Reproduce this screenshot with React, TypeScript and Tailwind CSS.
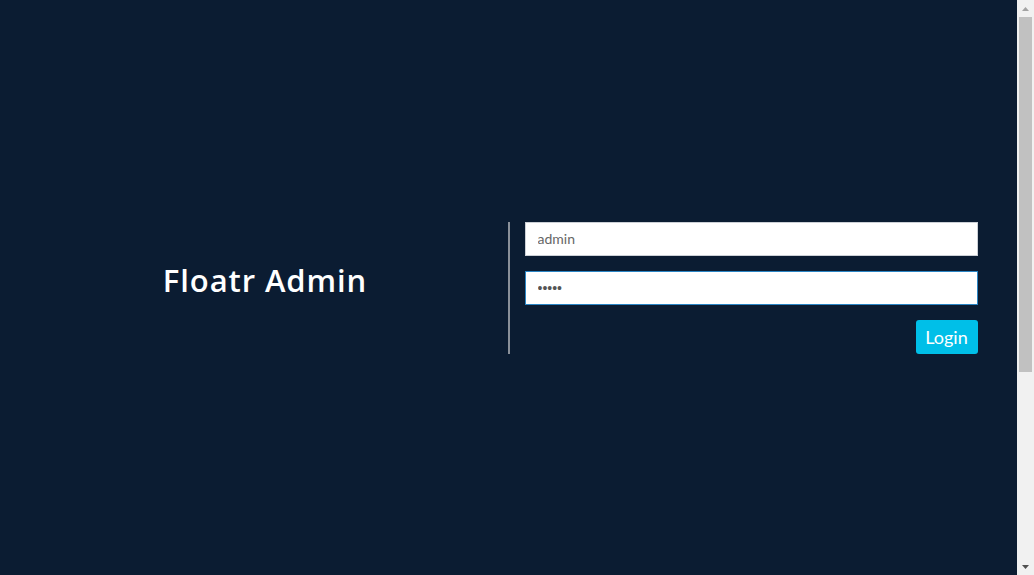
import React from "react";

export default function App() {
  return (
    <div className="flex h-[575px] w-full overflow-hidden">
      <div className="flex-1 bg-[#0b1c32] flex items-center">
        <div className="w-[970px] mx-auto px-[15px] -translate-x-px">
          <div className="flex -mx-[15px]">
            <div className="w-1/2 px-[15px] flex items-center justify-center">
              <h1 className="text-white font-semibold text-[31px] tracking-[0.9px] font-['Open_Sans',sans-serif] -mt-[14px]">
                Floatr Admin
              </h1>
            </div>
            <div className="w-1/2 border-l-2 border-[#8a9099] px-[15px]">
              <div className="mb-[15px]">
                <input
                  type="text"
                  defaultValue="admin"
                  className="block w-full h-[34px] bg-white border border-[#ccd0d6] px-[12px] text-[14px] text-[#666] font-['Lato',sans-serif] outline-none"
                />
              </div>
              <div className="mb-[15px]">
                <input
                  type="password"
                  defaultValue="admin"
                  className="block w-full h-[34px] bg-white border border-[#2a85c4] px-[12px] text-[14px] text-[#555] font-['Liberation_Sans',sans-serif] outline-none"
                />
              </div>
              <div className="flex justify-end">
                <button className="h-[34px] w-[62px] rounded-[3px] bg-[#00bfe8] text-white text-[18px] font-['Lato',sans-serif] leading-none">
                  Login
                </button>
              </div>
            </div>
          </div>
        </div>
      </div>
      <div className="w-[17px] bg-[#f1f1f1] flex flex-col">
        <div className="h-[17px] flex items-center justify-center">
          <svg width="7" height="4" viewBox="0 0 7 4">
            <polygon points="3.5,0 7,4 0,4" fill="#a3a3a3" />
          </svg>
        </div>
        <div className="flex-1 px-[2px]">
          <div className="h-[355px] bg-[#c1c1c1]" />
        </div>
        <div className="h-[17px] flex items-center justify-center">
          <svg width="7" height="4" viewBox="0 0 7 4">
            <polygon points="0,0 7,0 3.5,4" fill="#505050" />
          </svg>
        </div>
      </div>
    </div>
  );
}
